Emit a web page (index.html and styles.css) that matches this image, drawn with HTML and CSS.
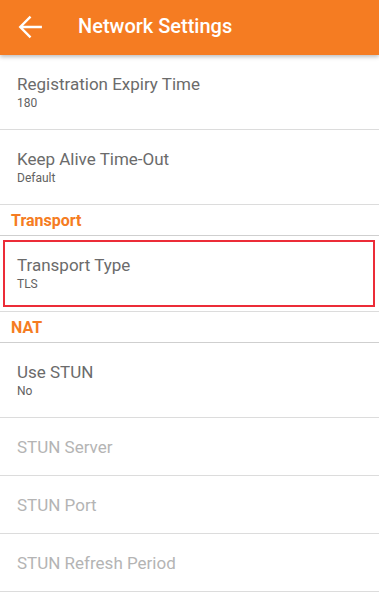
FILE: index.html
```html
<!DOCTYPE html>
<html lang="en">
<head>
    <meta charset="UTF-8">
    <meta name="viewport" content="width=device-width, initial-scale=1.0">
    <title>Network Settings</title>
    <link rel="stylesheet" href="styles.css">
</head>
<body>
    <!-- Toolbar -->
    <header class="toolbar">
        <button class="back-btn">
            <svg viewBox="0 0 24 24" xmlns="http://www.w3.org/2000/svg">
                <path d="M23 12H3.5 M12.5 2.5L3 12l9.5 9.5"/>
            </svg>
        </button>
        <h1 class="toolbar-title">Network Settings</h1>
    </header>

    <!-- Preference list -->
    <main class="pref-list">
        <div class="pref">
            <div class="pref-title">Registration Expiry Time</div>
            <div class="pref-summary">180</div>
        </div>
        <div class="pref">
            <div class="pref-title">Keep Alive Time-Out</div>
            <div class="pref-summary">Default</div>
        </div>

        <div class="pref-category">Transport</div>
        <div class="pref pref-focused">
            <div class="focus-box">
                <div class="pref-title">Transport Type</div>
                <div class="pref-summary">TLS</div>
            </div>
        </div>

        <div class="pref-category">NAT</div>
        <div class="pref">
            <div class="pref-title">Use STUN</div>
            <div class="pref-summary">No</div>
        </div>
        <div class="pref pref-single disabled">
            <div class="pref-title">STUN Server</div>
        </div>
        <div class="pref pref-single disabled">
            <div class="pref-title">STUN Port</div>
        </div>
        <div class="pref pref-single disabled">
            <div class="pref-title">STUN Refresh Period</div>
        </div>
    </main>
</body>
</html>
```

FILE: styles.css
```css
* {
    margin: 0;
    padding: 0;
    box-sizing: border-box;
}

body {
    font-family: Roboto, "Liberation Sans", sans-serif;
    background: #ffffff;
    width: 379px;
}

/* Toolbar */
.toolbar {
    height: 55px;
    background: #f57c22;
    display: flex;
    align-items: center;
    padding-left: 17px;
    box-shadow: 0 2px 4px rgba(0, 0, 0, 0.25);
    position: relative;
    z-index: 1;
}

.back-btn {
    background: none;
    border: none;
    width: 26px;
    height: 26px;
    display: flex;
    margin-top: -1px;
}

.back-btn svg {
    width: 26px;
    height: 26px;
    fill: none;
    stroke: #ffffff;
    stroke-width: 2.2;
}

.toolbar-title {
    color: #ffffff;
    font-size: 20px;
    font-weight: 500;
    margin-left: 35px;
    margin-top: -3px;
}

/* Preferences */
.pref {
    min-height: 75px;
    border-bottom: 1px solid #dcdcdc;
    display: flex;
    flex-direction: column;
    justify-content: center;
    padding: 0 17px;
}

.pref-single {
    min-height: 58px;
}

.pref-title {
    font-size: 17px;
    line-height: 20px;
    color: #6b6b6b;
}

.pref-summary {
    font-size: 12px;
    line-height: 16px;
    margin-top: 1px;
    color: #626262;
}

.disabled .pref-title {
    color: #b4b4b4;
}

.pref-category {
    height: 31px;
    border-bottom: 1px solid #cfcfcf;
    padding: 0 11px;
    display: flex;
    align-items: center;
    color: #f57c22;
    font-size: 16px;
    font-weight: 700;
}

/* Focused preference */
.pref-focused {
    padding: 4px 4px 4px 3px;
    min-height: 76px;
}

.focus-box {
    flex: 1;
    border: 2px solid #ec2c38;
    padding: 0 12px;
    display: flex;
    flex-direction: column;
    justify-content: center;
}
```
